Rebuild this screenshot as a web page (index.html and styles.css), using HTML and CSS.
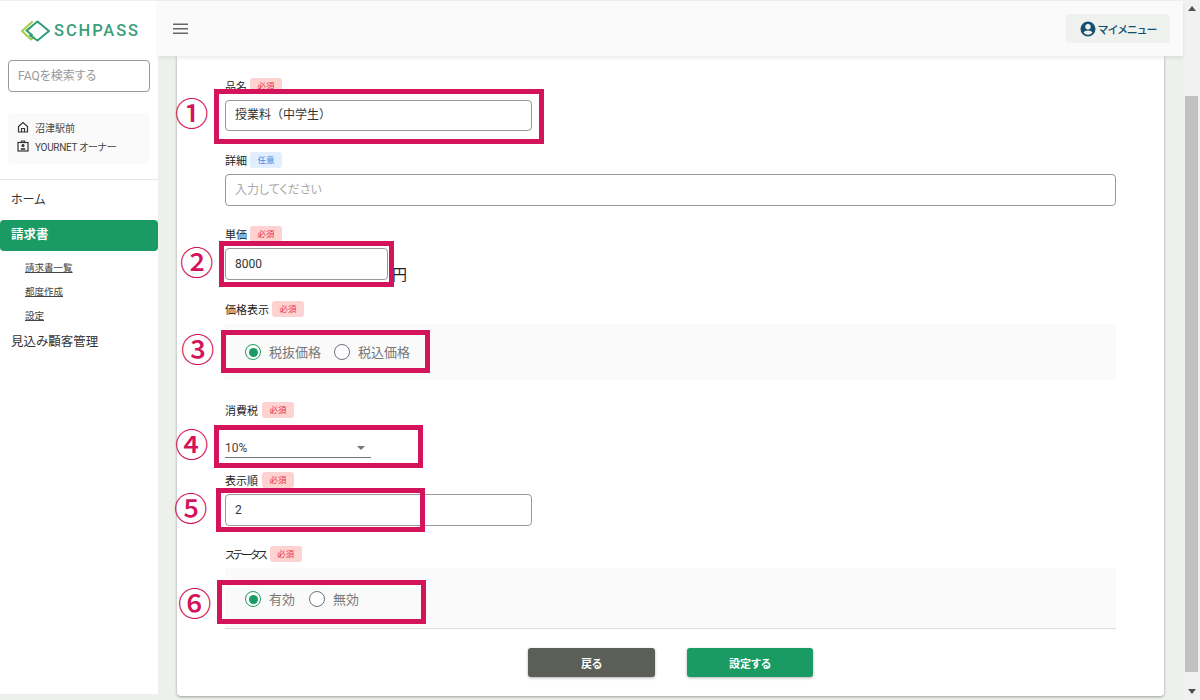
FILE: index.html
```html
<!DOCTYPE html>
<html lang="ja">
<head>
<meta charset="utf-8">
<title>SCHPASS</title>
<link rel="stylesheet" href="styles.css">
</head>
<body>
<div class="app">
  <aside class="sidebar">
    <div class="logo">
      <svg class="logo-mark" width="31" height="22" viewBox="0 0 31 22" fill="none" stroke-width="2" stroke-linejoin="round" stroke-linecap="round">
        <path d="M12 2 L2 11 L11 19.5 L14 17" stroke="#a3cc4e"/>
        <path d="M12 6.5 L7 11 L10.5 14.5" stroke="#a3cc4e" stroke-width="1.6"/>
        <path d="M10 15.5 L17.5 20.5 L29 11 L17.5 1.5 L6.5 10.5 L12 15" stroke="#2f9d78"/>
      </svg>
      <span class="logo-text">SCHPASS</span>
    </div>
    <div class="search">FAQを検索する</div>
    <div class="school">
      <div class="school-row">
        <svg width="12" height="12" viewBox="0 0 12 12" fill="none" stroke="#333" stroke-width="1.2"><path d="M1.5 11V5.5L6 1.5l4.5 4V11Z"/><path d="M4.5 11V7.5h3V11" /></svg>
        <span>沼津駅前</span>
      </div>
      <div class="school-row school-role">
        <svg width="12" height="12" viewBox="0 0 12 12" fill="none" stroke="#333" stroke-width="1.2"><rect x="1" y="2.5" width="10" height="8.5"/><path d="M4.5 2.5V1h3v1.5"/><circle cx="6" cy="5.5" r="1" fill="#333"/><path d="M3.8 9h4.4" stroke-width="1.6"/></svg>
        <span>YOURNET オーナー</span>
      </div>
    </div>
    <nav class="nav">
      <a class="nav-item nav-home">ホーム</a>
      <a class="nav-item nav-active">請求書</a>
      <a class="nav-sub">請求書一覧</a>
      <a class="nav-sub">都度作成</a>
      <a class="nav-sub">設定</a>
      <a class="nav-item nav-prospect">見込み顧客管理</a>
    </nav>
  </aside>

  <div class="main">
    <header class="topbar">
      <svg class="burger" width="16" height="12" viewBox="0 0 16 12" fill="#666"><rect y="0.5" width="15" height="1.5"/><rect y="5" width="15" height="1.5"/><rect y="9.5" width="15" height="1.5"/></svg>
      <button class="mymenu">
        <svg width="18" height="18" viewBox="0 0 24 24" fill="#14506f"><path d="M12 2a10 10 0 1 0 0 20 10 10 0 0 0 0-20Zm0 3.4a3.6 3.6 0 1 1 0 7.2 3.6 3.6 0 0 1 0-7.2Zm0 14.2a7.7 7.7 0 0 1-6-2.9c.6-1.6 3.8-2.6 6-2.6s5.4 1 6 2.6a7.7 7.7 0 0 1-6 2.9Z"/></svg>
        <span>マイメニュー</span>
      </button>
    </header>

    <main class="card">
      <div class="field field-name">
        <div class="label">品名<span class="tag tag-req">必須</span></div>
        <div class="input input-mid">授業料（中学生）</div>
      </div>
      <div class="field field-detail">
        <div class="label">詳細<span class="tag tag-opt">任意</span></div>
        <div class="input input-full placeholder">入力してください</div>
      </div>
      <div class="field field-price">
        <div class="label">単価<span class="tag tag-req">必須</span></div>
        <div class="price-row">
          <div class="input input-price">8000</div>
          <span class="yen">円</span>
        </div>
      </div>
      <div class="field field-display">
        <div class="label">価格表示<span class="tag tag-req">必須</span></div>
        <div class="radio-panel panel-tax">
          <span class="radio on"></span><span class="radio-text">税抜価格</span>
          <span class="radio"></span><span class="radio-text">税込価格</span>
        </div>
      </div>
      <div class="field field-tax">
        <div class="label label-wide">消費税<span class="tag tag-req">必須</span></div>
        <div class="select"><span>10%</span><i class="caret"></i></div>
      </div>
      <div class="field field-order">
        <div class="label label-wide">表示順<span class="tag tag-req">必須</span></div>
        <div class="input input-mid">2</div>
      </div>
      <div class="field field-status">
        <div class="label label-tight">ステータス<span class="tag tag-req">必須</span></div>
        <div class="radio-panel panel-status">
          <span class="radio on"></span><span class="radio-text">有効</span>
          <span class="radio"></span><span class="radio-text">無効</span>
        </div>
      </div>
      <div class="actions">
        <button class="btn btn-back">戻る</button>
        <button class="btn btn-save">設定する</button>
      </div>

      <div class="mark box-1"></div><span class="num num-1">①</span>
      <div class="mark box-2"></div><span class="num num-2">②</span>
      <div class="mark box-3"></div><span class="num num-3">③</span>
      <div class="mark box-4"></div><span class="num num-4">④</span>
      <div class="mark box-5"></div><span class="num num-5">⑤</span>
      <div class="mark box-6"></div><span class="num num-6">⑥</span>
    </main>
  </div>

  <div class="scrollbar">
    <i class="arrow arrow-up"></i>
    <div class="thumb"></div>
    <i class="arrow arrow-down"></i>
  </div>
</div>
</body>
</html>
```

FILE: styles.css
```css
* { box-sizing: border-box; }
html, body { margin: 0; height: 100%; overflow: hidden; }
body {
  font-family: Roboto, "Noto Sans CJK JP", sans-serif;
  font-feature-settings: "palt";
  color: #222;
  background: #eef0ec;
}
.app { display: flex; height: 700px; padding-top: 1px; background: #eef0ec; }
.sidebar { width: 158px; height: 693px; background: #fff; flex: none; padding: 0 8px; }
.logo { display: flex; align-items: center; height: 59px; padding: 0 0 0 12px; gap: 3px; }
.logo-text { font-size: 16.5px; font-weight: 500; letter-spacing: 1.9px; color: #3a9f78; }
.search {
  height: 32px; width: 142px; border: 1px solid #999; border-radius: 4px;
  font-size: 12px; line-height: 30px; padding-left: 9px; color: #999;
}
.school {
  margin-top: 21px; width: 142px; height: 51px; background: #fafafa; border-radius: 4px;
  padding: 5px 0 0 9px; font-size: 10px; color: #444;
}
.school-row { display: flex; align-items: center; gap: 6px; height: 18px; }
.school-role { margin-top: 1px; }
.school-role span { letter-spacing: -0.3px; }
.nav { margin: 15px -8px 0; border-top: 1px solid #e6e6e6; }
.nav-item { display: block; font-size: 12px; color: #333; padding-left: 11px; }
.nav-home { height: 40px; line-height: 40px; }
.nav-active {
  height: 31px; line-height: 29px; background: #199b63; color: #fff; font-weight: 700;
  border-radius: 4px; font-size: 12.5px;
}
.nav-sub { display: block; font-size: 9.5px; color: #444; text-decoration: underline; padding-left: 25px; height: 24px; line-height: 24px; }
.nav-active + .nav-sub { margin-top: 5px; }
.nav-prospect { height: 30px; line-height: 30px; font-size: 12.5px; margin-top: -1px; }

.main { flex: 1; min-width: 0; display: flex; flex-direction: column; position: relative; }
.topbar {
  height: 55px; background: #fafafa; display: flex; align-items: center; justify-content: space-between;
  padding: 0 13px 0 15px; box-shadow: 0 2px 4px rgba(0,0,0,.08); position: relative; z-index: 2;
}
.mymenu {
  display: flex; align-items: center; gap: 1px; width: 104px; height: 29px; border: 0; border-radius: 4px;
  background: #eff1ee; color: #14506f; font: 500 11px Roboto, "Noto Sans CJK JP", sans-serif;
  font-feature-settings: "palt"; padding: 0 0 0 13px;
}
.card {
  position: relative; width: 987px; height: 640px; margin-left: 19px; background: #fff;
  border-radius: 0 0 4px 4px; box-shadow: 0 1px 3px rgba(0,0,0,.35); padding-left: 48px;
}
.field { width: 891px; }
.label { display: flex; align-items: center; font-size: 11px; color: #222; height: 14px; }
.tag { margin-left: 3px; width: 32px; height: 16px; border-radius: 3px; font-size: 8.5px; line-height: 16px; text-align: center; letter-spacing: 0; }
.label-wide .tag { margin-left: 4px; }
.label-tight { letter-spacing: -1.9px; }
.label-tight .tag { margin-left: 4px; }
.tag-req { background: #ffd2d2; color: #e8323c; }
.tag-opt { background: #e0eeff; color: #3f8ae0; }
.input {
  height: 32px; border: 1px solid #999; border-radius: 4px; background: #fff;
  font-size: 12px; line-height: 31px; padding-left: 9px; color: #333;
  font-feature-settings: normal;
}
.input-mid { width: 307px; }
.input-full { width: 891px; }
.input-price { width: 163px; }
.placeholder { color: #aaa; font-feature-settings: "palt"; }
.field-name { padding-top: 23px; }
.field-name .input { margin-top: 7px; height: 31px; line-height: 29px; }
.field-detail { margin-top: 22px; }
.field-detail .input { margin-top: 7px; }
.field-price { margin-top: 21px; }
.price-row { display: flex; margin-top: 7px; }
.yen { font-size: 15px; line-height: 20px; margin: 17px 0 0 4px; color: #222; }
.field-display { margin-top: 17px; }
.radio-panel { display: flex; align-items: center; width: 891px; background: #fafafa; padding-left: 20px; height: 56px; margin-top: 8px; }
.radio {
  width: 16px; height: 16px; border-radius: 50%; border: 1.5px solid #6b7280; background: #fff; flex: none; position: relative;
}
.radio.on { border-color: #199b63; }
.radio.on::after { content: ""; position: absolute; inset: 2.5px; border-radius: 50%; background: #199b63; }
.radio-text { font-size: 13px; color: #777; margin: 0 13px 2px 8px; }
.field-tax { margin-top: 23px; }
.select {
  width: 146px; height: 32px; margin-top: 9px; border-bottom: 1px solid #777; display: flex; align-items: center;
  justify-content: space-between; font-size: 12px; color: #444; padding: 12px 6px 0 0;
}
.caret { width: 0; height: 0; border: 4px solid transparent; border-top: 4px solid #777; border-bottom: 0; }
.field-order { margin-top: 15px; }
.field-order .input { margin-top: 7px; }
.field-status { margin-top: 21px; }
.field-status .radio-panel { height: 61px; margin-top: 7px; padding-top: 2px; border-bottom: 1px solid #ddd; }
.panel-status .radio-text { margin-right: 14px; }
.actions { display: flex; justify-content: center; gap: 32px; margin-top: 19px; width: 891px; }
.btn {
  width: 127px; height: 29px; border: 0; border-radius: 3px; color: #fff; font: 700 11px Roboto, "Noto Sans CJK JP", sans-serif;
  font-feature-settings: "palt"; box-shadow: 0 1px 3px rgba(0,0,0,.3);
}
.btn-back { background: #5c5e58; }
.btn-save { background: #199b63; width: 126px; }

.mark { position: absolute; border: 5px solid #d4145a; }
.box-1 { left: 37px; top: 33px; width: 330px; height: 55px; }
.box-2 { left: 42px; top: 185px; width: 175px; height: 46px; }
.box-3 { left: 44px; top: 274px; width: 209px; height: 43px; }
.box-4 { left: 37px; top: 369px; width: 209px; height: 43px; }
.box-5 { left: 39px; top: 432px; width: 209px; height: 44px; }
.box-6 { left: 40px; top: 524px; width: 209px; height: 44px; }
.num {
  position: absolute; font-size: 33.5px; line-height: 40px; color: #d4145a; font-weight: 500;
  font-family: "Noto Sans CJK JP", sans-serif; font-feature-settings: normal;
}
.num-1 { left: -2px; top: 36px; }
.num-2 { left: 3px; top: 185px; }
.num-3 { left: 4px; top: 272px; }
.num-4 { left: -2px; top: 367px; }
.num-5 { left: -3px; top: 431px; }
.num-6 { left: 1px; top: 526px; }

.scrollbar { width: 17px; flex: none; display: flex; flex-direction: column; align-items: center; background: #f1f1f1; margin-top: -1px; height: 700px; }
.arrow { width: 0; height: 0; border: 4px solid transparent; flex: none; }
.arrow-up { border-bottom: 5px solid #505050; border-top: 0; margin-top: 6px; }
.arrow-down { border-top: 5px solid #505050; border-bottom: 0; margin-top: 17px; }
.thumb { width: 13px; height: 576px; background: #c1c1c1; margin-top: 85px; }
```
